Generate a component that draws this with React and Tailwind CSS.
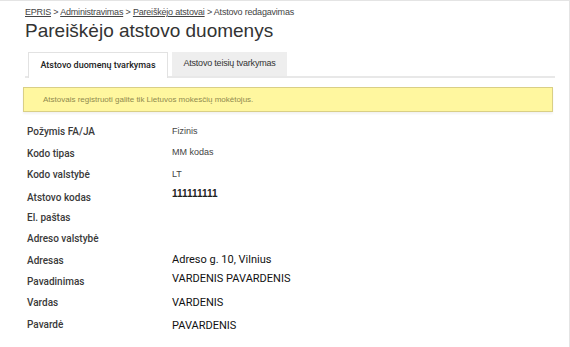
const ROWS = [
  { label: 'Požymis FA/JA', value: 'Fizinis', kind: 'small' },
  { label: 'Kodo tipas', value: 'MM kodas', kind: 'small' },
  { label: 'Kodo valstybė', value: 'LT', kind: 'small' },
  { label: 'Atstovo kodas', value: '111111111', kind: 'code', labelShift: 'mt-[4px]' },
  { label: 'El. paštas', value: '', kind: 'small' },
  { label: 'Adreso valstybė', value: '', kind: 'small' },
  { label: 'Adresas', value: 'Adreso g. 10, Vilnius', kind: 'big' },
  { label: 'Pavadinimas', value: 'VARDENIS PAVARDENIS', kind: 'big', shift: '-mt-1' },
  { label: 'Vardas', value: 'VARDENIS', kind: 'big' },
  { label: 'Pavardė', value: 'PAVARDENIS', kind: 'big', shift: 'mt-1' },
]

const valueClass = {
  small: "text-[9px] text-[#444] font-['Liberation_Sans',sans-serif]",
  code: "text-[10px] text-[#222] font-bold font-['Liberation_Sans',sans-serif] -mt-1",
  big: "text-[11px] text-[#111] font-['Liberation_Sans_Narrow','Roboto',sans-serif]",
}

export default function App() {
  return (
    <div className="w-[570px] h-[347px] bg-white overflow-hidden border-t border-r border-[#e4e4e4]">
      <div className="pl-[25px] pr-[8px]">
        <div className="pt-[5px] leading-[12px] text-[9px] tracking-[-0.2px] text-[#444] font-['Liberation_Sans',sans-serif]">
          <span className="underline">EPRIS</span> &gt; <span className="underline">Administravimas</span> &gt;{' '}
          <span className="underline">Pareiškėjo atstovai</span> &gt; Atstovo redagavimas
        </div>
        <h1 className="text-[19px] leading-[24px] text-[#333] font-['Liberation_Sans',sans-serif] mt-[1px]">
          Pareiškėjo atstovo duomenys
        </h1>

        <div className="mt-[10px] flex items-end border-b-2 border-[#e8e8e8] mr-[6px] h-[25px]">
          <div className="ml-[3px] h-[26px] -mb-[2px] w-[140px] bg-white border border-b-0 border-[#e2e2e2] flex items-center justify-center text-[9px] font-medium text-[#222] font-['Roboto',sans-serif]">
            Atstovo duomenų tvarkymas
          </div>
          <div className="ml-[4px] h-[24px] w-[115px] bg-[#eeeeee] flex items-center justify-center text-[9px] text-[#333] font-['Liberation_Sans',sans-serif] tracking-[-0.2px]">
            Atstovo teisių tvarkymas
          </div>
        </div>

        <div className="mt-[9px] -ml-[2px] mr-[8px] h-[25px] bg-[#fff79f] border border-[#d9cf86] shadow-[0_2px_2px_rgba(0,0,0,0.05)] flex items-center pl-[19px] text-[8px] text-[#8f8a4e] font-['Liberation_Sans',sans-serif]">
          Atstovais registruoti galite tik Lietuvos mokesčių mokėtojus.
        </div>

        <div className="mt-[9px] pl-[2px]">
          {ROWS.map(r => (
            <div key={r.label} className="h-[21.4px] flex items-center">
              <div className={`w-[145px] text-[10px] font-medium text-[#3a3a3a] font-['Roboto',sans-serif] ${r.labelShift || ''}`}>{r.label}</div>
              <div className={`${valueClass[r.kind]} ${r.shift || ''}`}>{r.value}</div>
            </div>
          ))}
        </div>
      </div>
    </div>
  )
}
